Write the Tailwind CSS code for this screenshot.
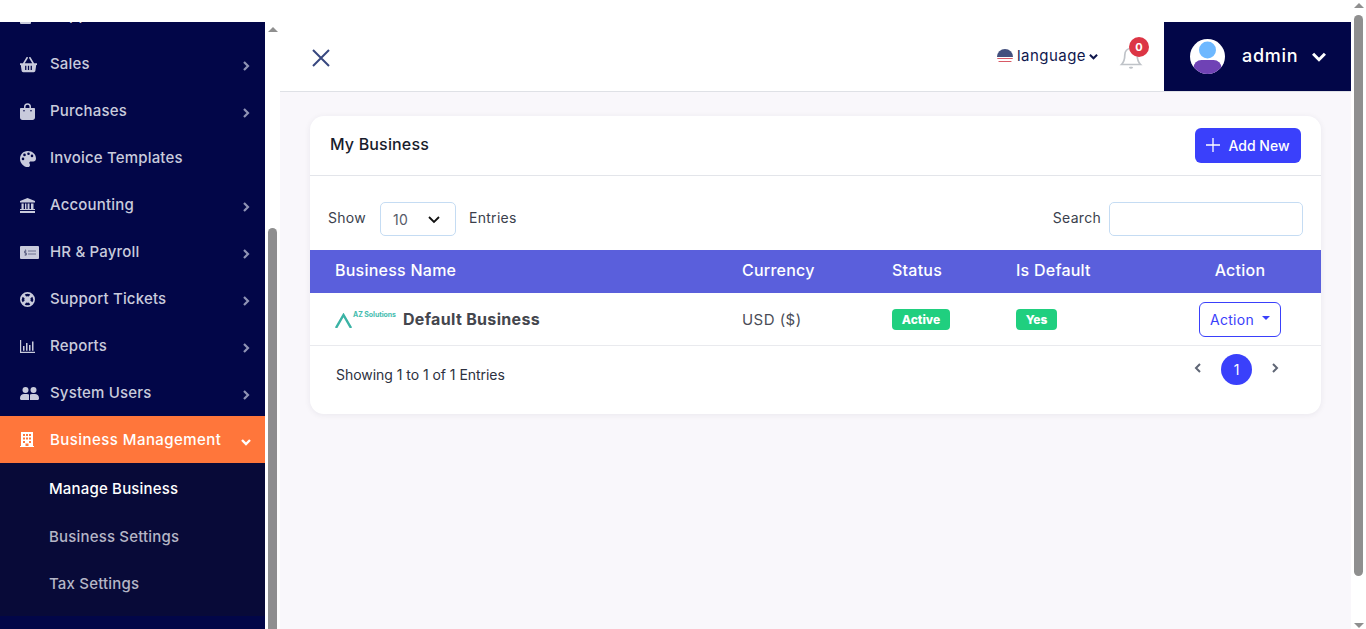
<!DOCTYPE html>
<html lang="en">
<head>
  <meta charset="UTF-8">
  <title>My Business</title>
  <script src="https://cdn.jsdelivr.net/npm/@tailwindcss/browser@4"></script>
</head>
<body class="h-[629px] overflow-hidden bg-white font-['Inter',sans-serif] text-[15px] text-[#1f2433]">
<div class="flex h-[629px]">
  <div class="flex min-w-0 flex-1 flex-col pt-[22px]">
    <div class="flex min-h-0 flex-1">

      <!-- Sidebar -->
      <aside class="w-[265px] shrink-0 overflow-hidden bg-[#020648] text-[15px] font-medium tracking-[0.012em] text-[#c9cbdc]">
        <nav class="-mt-[29px]">
          <a class="flex h-[47px] items-center pl-5 pr-[14px]"><span class="mr-[19px] mt-[2px] h-[12px] w-[11px] rounded-[1px] bg-[#c9cbdc]"></span><span class="mb-[2px]">Suppliers</span></a>
          <a class="flex h-[47px] items-center pl-5 pr-[14px] pt-[2px]">
            <svg class="mr-[13px] h-[17px] w-[17px]" viewBox="0 0 20 18" fill="currentColor"><path d="M0 7.500h3.400L7.600.6c.3-.5.9-.6 1.300-.3.5.3.6.9.3 1.300L5.600 7.500h8.800L10.800 1.600c-.3-.4-.2-1 .3-1.300.4-.3 1-.2 1.300.3l4.200 6.900H20v2h-.9l-1 6.800c-.1.9-.9 1.700-1.900 1.700H3.800c-1 0-1.800-.8-1.900-1.700l-1-6.800H0zM6 10.500v5h1.500v-5zm3.250 0v5h1.500v-5zm3.250 0v5H14v-5z"/></svg>
            <span>Sales</span>
            <svg class="ml-auto mt-[2px] h-[10px] w-[10px] text-[#8f93b5]" viewBox="0 0 10 10" fill="none" stroke="currentColor" stroke-width="2.200"><path d="M3 1l4 4-4 4"/></svg>
          </a>
          <a class="flex h-[47px] items-center pl-5 pr-[14px] pt-[2px]">
            <svg class="mr-[15px] h-[17px] w-[15px]" viewBox="0 0 15 17" fill="currentColor"><path d="M4 5V3.800a3.500 3.500 0 0 1 7 0V5h3c.6 0 1 .4 1 1v8.500c0 1.400-1.100 2.500-2.500 2.500h-10C1.100 17 0 15.900 0 14.500V6c0-.6.400-1 1-1zm1.500 0h4V3.800a2 2 0 0 0-4 0zM4 7a.8.8 0 1 0 0 1.600A.8.8 0 0 0 4 7zm7 0a.8.8 0 1 0 0 1.600A.8.8 0 0 0 11 7z"/></svg>
            <span>Purchases</span>
            <svg class="ml-auto mt-[2px] h-[10px] w-[10px] text-[#8f93b5]" viewBox="0 0 10 10" fill="none" stroke="currentColor" stroke-width="2.200"><path d="M3 1l4 4-4 4"/></svg>
          </a>
          <a class="flex h-[47px] items-center pl-5 pr-[14px] pt-[2px]">
            <svg class="mr-[14px] h-[16px] w-[16px]" viewBox="0 0 16 16" fill="currentColor"><path d="M7.500 0C3.300.1 0 3.500 0 7.700 0 12.200 3.600 16 7.800 16c1.500 0 2.200-1 2.200-2.100 0-.6-.3-1-.5-1.500-.4-.8-.2-2 1.300-2h2.500c1.500 0 2.700-1.200 2.700-2.700C16 3 12.200-.1 7.500 0zM3 9.200a1.300 1.300 0 1 1 0-2.600 1.300 1.300 0 0 1 0 2.600zm1.500-4a1.300 1.300 0 1 1 0-2.600 1.300 1.300 0 0 1 0 2.600zm4-1.200a1.300 1.300 0 1 1 0-2.600 1.300 1.300 0 0 1 0 2.600zm3.500 2.200a1.300 1.300 0 1 1 0-2.600 1.300 1.300 0 0 1 0 2.600z"/></svg>
            <span>Invoice Templates</span>
          </a>
          <a class="flex h-[47px] items-center pl-5 pr-[14px] pt-[2px]">
            <svg class="mr-[15px] h-[15px] w-[15px]" viewBox="0 0 15 15" fill="currentColor"><path d="M7.500 0L15 3v1.500H0V3zM1.500 5.500h2.200V11h1.300V5.500h1.400V11h1.200V5.500H9.500V11H11V5.500h2.500V11H15v1H0v-1h1.500zM0 13h15v2H0z"/></svg>
            <span>Accounting</span>
            <svg class="ml-auto mt-[2px] h-[10px] w-[10px] text-[#8f93b5]" viewBox="0 0 10 10" fill="none" stroke="currentColor" stroke-width="2.200"><path d="M3 1l4 4-4 4"/></svg>
          </a>
          <a class="flex h-[47px] items-center pl-5 pr-[14px] pt-[2px]">
            <svg class="mr-[11px] h-[13px] w-[19px]" viewBox="0 0 19 13"><path fill="currentColor" d="M0 1a1 1 0 0 1 1-1h17a1 1 0 0 1 1 1v11a1 1 0 0 1-1 1H1a1 1 0 0 1-1-1z"/><path fill="none" stroke="#6d7090" d="M8 5h8M8 8h8M5.500 3.500v6M6.500 5H4.500v2h2v2h-2"/></svg>
            <span>HR &amp; Payroll</span>
            <svg class="ml-auto mt-[2px] h-[10px] w-[10px] text-[#8f93b5]" viewBox="0 0 10 10" fill="none" stroke="currentColor" stroke-width="2.200"><path d="M3 1l4 4-4 4"/></svg>
          </a>
          <a class="flex h-[47px] items-center pl-5 pr-[14px] pt-[2px]">
            <svg class="mr-[15px] h-[15px] w-[15px]" viewBox="0 0 15 15" fill="currentColor"><path fill-rule="evenodd" d="M7.500 0a7.500 7.500 0 1 1 0 15 7.500 7.500 0 0 1 0-15zM4.700 2.600l1.500 2a2.900 2.900 0 0 1 2.600 0l1.500-2a5.400 5.400 0 0 0-5.600 0zM2.600 4.700a5.400 5.400 0 0 0 0 5.600l2-1.500a2.900 2.900 0 0 1 0-2.600zm7.800 1.500a2.900 2.900 0 0 1 0 2.600l2 1.500a5.400 5.400 0 0 0 0-5.600zM6.200 10.400l-1.500 2a5.400 5.400 0 0 0 5.600 0l-1.500-2a2.900 2.900 0 0 1-2.600 0z"/></svg>
            <span>Support Tickets</span>
            <svg class="ml-auto mt-[2px] h-[10px] w-[10px] text-[#8f93b5]" viewBox="0 0 10 10" fill="none" stroke="currentColor" stroke-width="2.200"><path d="M3 1l4 4-4 4"/></svg>
          </a>
          <a class="flex h-[47px] items-center pl-5 pr-[14px] pt-[2px]">
            <svg class="mr-[15px] h-[13px] w-[15px]" viewBox="0 0 15 13" fill="currentColor"><path d="M0 0h1.200v11.800H15V13H0zM3 6h1.500v4.800H3zM6 3h1.500v7.800H6zM9 5h1.500v5.800H9zM12 1.500h1.500v9.300H12z"/></svg>
            <span>Reports</span>
            <svg class="ml-auto mt-[2px] h-[10px] w-[10px] text-[#8f93b5]" viewBox="0 0 10 10" fill="none" stroke="currentColor" stroke-width="2.200"><path d="M3 1l4 4-4 4"/></svg>
          </a>
          <a class="flex h-[47px] items-center pl-5 pr-[14px] pt-[2px]">
            <svg class="mr-[11px] h-[13px] w-[19px]" viewBox="0 0 19 13" fill="currentColor"><circle cx="5.500" cy="3" r="3"/><circle cx="13.500" cy="3" r="3"/><path d="M0 11c0-2.500 2-4 4-4h3c.8 0 1.500.2 2 .6V13H1.500C.6 13 0 12.400 0 11.500zM10 7.600c.6-.4 1.200-.6 2-.6h3c2 0 4 1.500 4 4v.5c0 .9-.6 1.500-1.500 1.500H10z"/></svg>
            <span>System Users</span>
            <svg class="ml-auto mt-[2px] h-[10px] w-[10px] text-[#8f93b5]" viewBox="0 0 10 10" fill="none" stroke="currentColor" stroke-width="2.200"><path d="M3 1l4 4-4 4"/></svg>
          </a>
          <a class="flex h-[47px] items-center bg-[#ff763b] pl-5 pr-[14px] pt-[2px] text-white">
            <svg class="mb-[2px] mr-[16px] h-[15px] w-[14px]" viewBox="0 0 14 15" fill="currentColor"><path fill-rule="evenodd" d="M1 0h12v14h1v1H0v-1h1zM3 2v2h2V2zm3 0v2h2V2zm3 0v2h2V2zM3 5.500v2h2v-2zm3 0v2h2v-2zm3 0v2h2v-2zM3 9v2h2V9zm6 0v2h2V9zm-3.500 2.500V14h3v-2.500z"/></svg>
            <span class="tracking-[0.03em]">Business Management</span>
            <svg class="ml-auto mt-[2px] h-[10px] w-[10px]" viewBox="0 0 10 10" fill="none" stroke="currentColor" stroke-width="2.400"><path d="M1 3l4 4 4-4"/></svg>
          </a>
          <div class="bg-[#080a38] pl-[49px]">
            <a class="flex h-[51px] items-center pt-[1px] text-white">Manage Business</a>
            <a class="flex h-[47px] items-center text-[#b5b6c6]">Business Settings</a>
            <a class="flex h-[47px] items-center pb-[1px] text-[#b5b6c6]">Tax Settings</a>
            <div class="h-[8px]"></div>
          </div>
        </nav>
      </aside>

      <!-- Sidebar scrollbar -->
      <div class="relative w-[15px] shrink-0 bg-white">
        <span class="absolute left-[3px] top-[5px] h-0 w-0 border-x-[5px] border-b-[5px] border-x-transparent border-b-[#8f8f8f]"></span>
        <span class="absolute bottom-0 left-[3px] top-[206px] w-[9px] rounded-t-full bg-[#8f8f8f]"></span>
      </div>

      <!-- Main area -->
      <main class="min-w-0 flex-1 bg-[#f9f7fb]">
        <header class="flex h-[70px] items-center border-b border-[#dfe1e6] bg-white">
          <svg class="ml-[31px] mt-[3px] h-[20px] w-[20px] text-[#37477f]" viewBox="0 0 20 20" fill="none" stroke="currentColor" stroke-width="2"><path d="M2 2l16 16M18 2L2 18"/></svg>
          <div class="ml-auto flex h-full items-center">
            <svg class="mr-[4px] mt-[1px] h-4 w-4" viewBox="0 0 16 16">
              <clipPath id="flag"><circle cx="8" cy="8" r="8"/></clipPath>
              <g clip-path="url(#flag)">
                <rect width="16" height="16" fill="#fff"/>
                <rect width="16" height="8" fill="#43507e"/>
                <path d="M0 9.500h16M0 12.500h16" stroke="#d85a66" stroke-width="1.200"/>
              </g>
            </svg>
            <span class="text-[15px] tracking-[0.03em] text-[#0f174d]">language</span>
            <svg class="ml-[3px] h-[9px] w-[9px] text-[#0f174d]" viewBox="0 0 10 10" fill="none" stroke="currentColor" stroke-width="2.200"><path d="M1 3l4 4 4-4"/></svg>
            <div class="relative ml-[21px] mr-[21px] mt-[3px]">
              <svg class="h-[24px] w-[24px] text-[#bfc3c8]" viewBox="0 0 24 24" fill="none" stroke="currentColor" stroke-width="1.700"><path d="M12 2.500c-3.800 0-6.200 2.800-6.200 6.500 0 5-1.300 7.500-3.300 9.500h19c-2-2-3.300-4.500-3.300-9.500 0-3.700-2.400-6.500-6.200-6.500zM10.500 21a1.800 1.800 0 0 0 3 0"/></svg>
              <span class="absolute -right-[6px] -top-[9px] flex h-5 w-5 items-center justify-center rounded-full bg-[#dc3545] text-[11px] font-bold text-white">0</span>
            </div>
            <div class="flex h-full w-[187px] items-center bg-[#020648] pl-[26px] text-white">
              <svg class="h-[35px] w-[35px]" viewBox="0 0 35 35">
                <clipPath id="avatar"><circle cx="17.500" cy="17.500" r="17.500"/></clipPath>
                <g clip-path="url(#avatar)">
                  <rect width="35" height="35" fill="#fff"/>
                  <circle cx="17.500" cy="11" r="8.500" fill="#6db8ff"/>
                  <rect x="3.500" y="21" width="28" height="16" rx="8" fill="#6f42b5"/>
                </g>
              </svg>
              <span class="mb-[3px] ml-[17px] text-[18px] font-medium tracking-[0.04em]">admin</span>
              <svg class="ml-[14px] h-[14px] w-[14px]" viewBox="0 0 13 13" fill="none" stroke="currentColor" stroke-width="2.800"><path d="M1 3.500l5.500 5.500L12 3.500"/></svg>
            </div>
          </div>
        </header>

        <!-- Card -->
        <section class="ml-[30px] mr-[30px] mt-[24px] h-[298px] overflow-hidden rounded-[14px] bg-white shadow-[0_1px_6px_rgba(30,30,60,0.07)]">
          <div class="flex h-[60px] items-center justify-between border-b border-[#e3e5ea] pl-5 pr-5">
            <h2 class="mb-[3px] text-[16px] font-medium tracking-[0.01em] text-[#181c2c]">My Business</h2>
            <button class="flex h-[35px] w-[106px] items-center justify-center gap-[8px] rounded-[6px] bg-[#3a40fb] text-[14px] font-medium text-white">
              <svg class="mb-[2px] h-[14px] w-[14px]" viewBox="0 0 14 14" fill="none" stroke="currentColor" stroke-width="1.300"><path d="M7 0v14M0 7h14"/></svg>
              <span class="mb-[1px]">Add New</span>
            </button>
          </div>

          <div class="flex h-[74px] items-center justify-between pl-[18px] pr-[18px] pt-[12px] text-[14px] tracking-[0.02em] text-[#3b3f4d]">
            <div class="flex items-center">
              <span class="mb-[3px] w-[52px]">Show</span>
              <div class="flex h-[34px] w-[76px] items-center justify-between rounded-[5px] border border-[#c5dcf3] pl-3 pr-[15px]">
                <span class="text-[#575b68]">10</span>
                <svg class="h-[9px] w-[12px] text-[#111]" viewBox="0 0 12 9" fill="none" stroke="currentColor" stroke-width="1.800"><path d="M1 2l5 5 5-5"/></svg>
              </div>
              <span class="mb-[3px] ml-[13px]">Entries</span>
            </div>
            <div class="flex items-center">
              <label class="mb-[3px] mr-[8px]">Search</label>
              <input class="h-[34px] w-[194px] rounded-[5px] border border-[#c5dcf3] bg-white" type="text">
            </div>
          </div>

          <table class="w-full table-fixed border-collapse">
            <thead class="bg-[#5a5fdc] text-[16px] text-white">
              <tr class="h-[43px] text-left">
                <th class="w-[407px] pb-[3px] pl-[25px] font-medium tracking-[0.015em]">Business Name</th>
                <th class="w-[150px] pb-[3px] pl-[25px] font-medium tracking-[0.015em]">Currency</th>
                <th class="w-[124px] pb-[3px] pl-[25px] font-medium tracking-[0.015em]">Status</th>
                <th class="w-[168px] pb-[3px] pl-[25px] font-medium tracking-[0.015em]">Is Default</th>
                <th class="pb-[3px] text-center font-medium tracking-[0.015em]">Action</th>
              </tr>
            </thead>
            <tbody>
              <tr class="h-[52px] border-b border-[#e9eaee]">
                <td class="pl-[25px]">
                  <div class="flex items-center">
                    <div class="relative h-[20px] w-[68px] shrink-0">
                      <svg class="absolute bottom-[1px] left-0 h-[15px] w-[17px] text-[#3bb3a5]" viewBox="0 0 17 15" fill="none" stroke="currentColor" stroke-width="2.400"><path d="M1 15L8.500 2 16 15"/></svg>
                      <span class="absolute left-[18px] top-[1px] text-[7px] font-bold leading-[10px] tracking-[-0.01em] whitespace-nowrap text-[#45bcae]">AZ Solutions</span>
                    </div>
                    <span class="text-[16px] font-bold tracking-[0.02em] text-[#44464d]">Default Business</span>
                  </div>
                </td>
                <td class="pl-[25px] pt-[2px] text-[15px] tracking-[0.03em] text-[#4a4d57]">USD ($)</td>
                <td class="pl-[25px]"><span class="inline-flex h-[21px] w-[58px] items-center justify-center rounded-[4px] bg-[#20cf7f] text-[12px] font-extrabold text-white">Active</span></td>
                <td class="pl-[25px]"><span class="inline-flex h-[21px] w-[41px] items-center justify-center rounded-[4px] bg-[#20cf7f] text-[12px] font-extrabold text-white">Yes</span></td>
                <td class="pt-[1px] text-center">
                  <button class="inline-flex h-[35px] w-[82px] items-center justify-center gap-[8px] rounded-[6px] border border-[#3a40fb] text-[14px] tracking-[0.02em] text-[#3a40fb]">
                    Action
                    <span class="mb-[2px] h-0 w-0 border-x-[4px] border-t-[4px] border-x-transparent border-t-[#3a40fb]"></span>
                  </button>
                </td>
              </tr>
            </tbody>
          </table>

          <div class="flex items-start justify-between pl-[26px] pr-[41px]">
            <span class="pt-[18px] text-[14px] tracking-[-0.003em] text-[#2d3140]">Showing 1 to 1 of 1 Entries</span>
            <div class="flex items-start pt-[8px]">
              <svg class="mt-[9px] h-[10px] w-[10px] text-[#5f6675]" viewBox="0 0 10 10" fill="none" stroke="currentColor" stroke-width="2"><path d="M7 1L3 5l4 4"/></svg>
              <span class="mx-[18px] flex h-[31px] w-[31px] items-center justify-center rounded-full bg-[#3a40fb] text-[14px] text-white">1</span>
              <svg class="mt-[9px] h-[10px] w-[10px] text-[#5f6675]" viewBox="0 0 10 10" fill="none" stroke="currentColor" stroke-width="2"><path d="M3 1l4 4-4 4"/></svg>
            </div>
          </div>
        </section>
      </main>
    </div>
  </div>

  <!-- Page scrollbar -->
  <div class="relative w-[15px] shrink-0 bg-white">
    <span class="absolute left-[3px] top-[3px] h-0 w-0 border-x-[5px] border-b-[5px] border-x-transparent border-b-[#8f8f8f]"></span>
    <span class="absolute left-[3px] top-[15px] h-[561px] w-[9px] rounded-full bg-[#8f8f8f]"></span>
    <span class="absolute bottom-[1px] left-[3px] h-0 w-0 border-x-[5px] border-t-[5px] border-x-transparent border-t-[#8f8f8f]"></span>
  </div>
</div>
</body>
</html>
